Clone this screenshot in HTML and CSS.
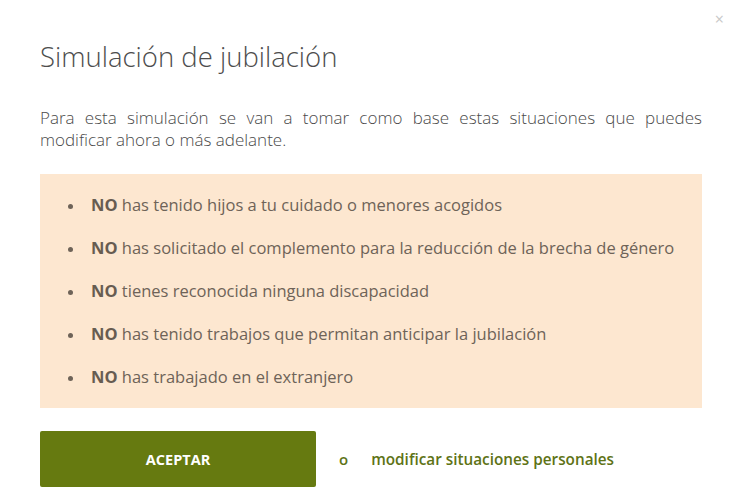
FILE: index.html
```html
<!DOCTYPE html>
<html lang="es">
<head>
    <meta charset="UTF-8">
    <meta name="viewport" content="width=device-width, initial-scale=1.0">
    <title>Simulación de jubilación</title>
    <link rel="stylesheet" href="styles.css">
</head>
<body>
<div class="modal">
    <button class="modal-close" aria-label="Cerrar">&times;</button>
    <h1 class="modal-title">Simulación de jubilación</h1>
    <p class="modal-intro">Para esta simulación se van a tomar como base estas situaciones que puedes modificar ahora o más adelante.</p>

    <div class="situaciones">
        <ul class="situaciones-list">
            <li><strong>NO</strong> has tenido hijos a tu cuidado o menores acogidos</li>
            <li><strong>NO</strong> has solicitado el complemento para la reducción de la brecha de género</li>
            <li><strong>NO</strong> tienes reconocida ninguna discapacidad</li>
            <li><strong>NO</strong> has tenido trabajos que permitan anticipar la jubilación</li>
            <li><strong>NO</strong> has trabajado en el extranjero</li>
        </ul>
    </div>

    <div class="modal-actions">
        <button class="btn-aceptar">ACEPTAR</button>
        <span class="separator">o</span>
        <a href="#" class="link-modificar">modificar situaciones personales</a>
    </div>
</div>
</body>
</html>
```

FILE: styles.css
```css
body {
    margin: 0;
    background-color: #fff;
    font-family: "Open Sans", Arial, sans-serif;
    color: #555;
}

.modal {
    position: relative;
    padding: 40px 43px 0 40px;
}

.modal-close {
    position: absolute;
    top: 8px;
    right: 21px;
    border: none;
    background: none;
    padding: 0;
    font-size: 16px;
    color: #c8c8c8;
    cursor: pointer;
    font-family: "Open Sans", Arial, sans-serif;
}

.modal-title {
    margin: 0;
    font-size: 27.5px;
    font-weight: 300;
    line-height: 33px;
    color: #4d4d4d;
}

.modal-intro {
    margin: 34px 0 0;
    font-size: 17px;
    font-weight: 300;
    line-height: 22px;
    text-align: justify;
    color: #4a4a4a;
}

/* caja con las situaciones personales */
.situaciones {
    margin-top: 23px;
    background-color: #fde7d0;
    padding: 20px 10px 20px 27px;
}

.situaciones-list {
    list-style: none;
    margin: 0;
    padding: 0 0 0 24px;
    color: #6e6358;
    font-size: 16.5px;
}

.situaciones-list li {
    line-height: 22px;
    margin-bottom: 21px;
}

/* viñeta redonda */
.situaciones-list li::before {
    content: "";
    display: inline-block;
    width: 5px;
    height: 5px;
    border-radius: 50%;
    background-color: #6e6358;
    margin-left: -23px;
    margin-right: 18px;
    vertical-align: middle;
}

.situaciones-list li:last-child {
    margin-bottom: 0;
}

.situaciones-list strong {
    color: #675c51;
}

.modal-actions {
    display: flex;
    align-items: center;
    margin-top: 23px;
}

.btn-aceptar {
    width: 276px;
    height: 56px;
    border: none;
    border-radius: 2px;
    background-color: #667a10;
    color: #fff;
    font-family: "Open Sans", Arial, sans-serif;
    font-weight: 700;
    font-size: 14.5px;
    cursor: pointer;
}

.separator {
    margin-left: 23px;
    color: #5e7316;
    font-size: 15px;
    font-weight: 600;
}

.link-modificar {
    margin-left: 23px;
    color: #5e7316;
    font-size: 15.3px;
    font-weight: 600;
    text-decoration: none;
}
```
